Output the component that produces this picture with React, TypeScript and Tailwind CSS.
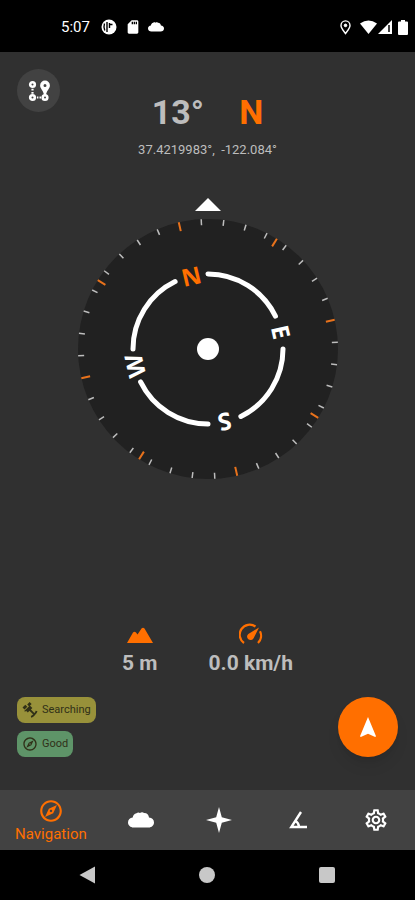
import React from 'react';
import { MdOutlineExplore, MdOutlineSettings, MdSdCard } from 'react-icons/md';

const AZIMUTH = 13;

const point = (angle: number, r: number) => {
  const rad = (angle * Math.PI) / 180;
  return [130 + r * Math.sin(rad), 130 - r * Math.cos(rad)];
};

const arc = (from: number, to: number, r: number) => {
  const [x1, y1] = point(from, r);
  const [x2, y2] = point(to, r);
  return `M${x1} ${y1}A${r} ${r} 0 0 1 ${x2} ${y2}`;
};

const minorTicks = Array.from({ length: 36 }, (_, i) => i * 10).filter((a) => a % 90 !== 0);
const majorTicks = Array.from({ length: 8 }, (_, i) => i * 45);

const cardinals = [
  { label: 'N', angle: 0, color: '#ff6f00' },
  { label: 'E', angle: 90, color: '#ffffff' },
  { label: 'S', angle: 180, color: '#ffffff' },
  { label: 'W', angle: 270, color: '#ffffff' },
];

const CloudIcon = ({ className }: { className?: string }) => (
  <svg viewBox="0 0 26 16" fill="currentColor" className={className}>
    <path d="M5.500 15.500C2.500 15.500 0 13.300 0 10.500C0 7.800 2 5.800 4.700 5.600C5 3.500 6.300 1.500 8.500 1.200C9.500 0.300 11 0.200 12 1C13 0.200 15 0 16 1C18.800 0.800 20.800 3 21 5.600C24 5.800 26 7.800 26 10.500C26 13.300 23.700 15.500 20.700 15.500Z" />
  </svg>
);

const RouteIcon = () => (
  <svg width="22" height="22" viewBox="0 0 22 22" fill="none" stroke="currentColor">
    <circle cx="4.500" cy="4.500" r="2.300" strokeWidth="2.600" />
    <circle cx="4.500" cy="17.500" r="2.300" strokeWidth="2.600" />
    <circle cx="17" cy="17.500" r="2.300" strokeWidth="2.600" />
    <path d="M4.500 8.800v1.800M4.500 11.900v1.800M8.900 17.500h1.500M11.500 17.500h1.500" strokeWidth="2.200" />
    <path fillRule="evenodd" fill="currentColor" stroke="none" d="M17 .5a4.900 4.900 0 0 0-4.900 4.900c0 3.400 3.600 5 4 10.300h1.800c.4-5.300 4-6.900 4-10.300A4.900 4.900 0 0 0 17 .5Zm0 3.500a1.500 1.500 0 1 1 0 3 1.500 1.500 0 0 1 0-3Z" />
  </svg>
);

const SatelliteIcon = () => (
  <svg width="16" height="16" viewBox="0 0 16 16" fill="currentColor">
    <path d="M.5 5.500 3.300 2.700l2 2-2.800 2.800ZM5.200 2.400 7.600 0l2 2-2.400 2.400ZM2.200 9 6 5.200l1.800-1.800 2.600 2.600-4.600 4.600-1.800-1.800-.9.900Z" />
    <path d="m7.500 7.500 4.700 4.700M9 14.800q1.500-.3 3.200-2.200 2-1.800 2.400-3.600" fill="none" stroke="currentColor" strokeWidth="1.800" />
  </svg>
);

const StatusBar = () => (
  <header className="flex h-[52px] items-center justify-between bg-black pl-[61px] pr-[7px] pt-[2px] text-white">
    <div className="flex items-center">
      <span className="text-[15px] leading-5">5:07</span>
      <svg width="16" height="16" viewBox="0 0 16 16" className="ml-[11px]">
        <circle cx="8" cy="8" r="7.500" fill="#fff" />
        <path d="M6 3v10M3.500 4.500Q2.300 8 3.800 11.500M8.500 4v5M8.500 5.500h3" stroke="#000" strokeWidth="1.400" fill="none" />
      </svg>
      <MdSdCard className="ml-[8px] size-4" />
      <CloudIcon className="ml-[7px] h-[12px] w-4" />
    </div>
    <div className="flex items-center">
      <svg width="11" height="15" viewBox="0 0 11 15" fill="none" stroke="#fff">
        <path d="M5.500 13.500C3 10.200 1 8 1 5.400a4.500 4.500 0 0 1 9 0c0 2.600-2 4.800-4.500 8.100Z" strokeWidth="1.400" />
        <circle cx="5.500" cy="5.400" r="1.300" fill="#fff" />
      </svg>
      <svg width="17" height="14" viewBox="0 0 17 14" fill="#fff" className="ml-[9px]">
        <path d="M8.500 14 0 3.600Q8.500-2.800 17 3.600Z" />
      </svg>
      <svg width="14" height="14" viewBox="0 0 14 14" fill="#fff" className="ml-px">
        <path d="M14 0v14H0Z" />
        <path d="M11 5v7" stroke="#000" strokeWidth="1.500" />
      </svg>
      <svg width="10" height="15" viewBox="0 0 10 15" fill="#fff" className="ml-[6px]">
        <path d="M3 0h4v1.500h2q1 0 1 1V14q0 1-1 1H1q-1 0-1-1V2.500q0-1 1-1h2Z" />
      </svg>
    </div>
  </header>
);

const Compass = () => (
  <div className="flex flex-col items-center gap-2">
    <svg width="26" height="13" viewBox="0 0 26 13">
      <path d="M13 0 26 13H0Z" fill="#fff" />
    </svg>
    <svg viewBox="0 0 260 260" className="w-[260px] max-w-full">
      <circle cx="130" cy="130" r="130" fill="#212121" />
      <g transform={`rotate(${-AZIMUTH} 130 130)`}>
        {minorTicks.map((a) => (
          <path key={a} d="M130 0v6" stroke="#bdbdbd" strokeWidth="1.500" transform={`rotate(${a} 130 130)`} />
        ))}
        {majorTicks.map((a) => (
          <path key={a} d="M130 0v9" stroke="#e8721c" strokeWidth="2" transform={`rotate(${a} 130 130)`} />
        ))}
        {[0, 90, 180, 270].map((a) => (
          <path key={a} d={arc(a + 13, a + 77, 75)} fill="none" stroke="#fff" strokeWidth="5" strokeLinecap="round" />
        ))}
        {cardinals.map((c) => (
          <text
            key={c.label}
            x="130"
            y="64"
            fill={c.color}
            fontSize="24"
            textAnchor="middle"
            transform={`rotate(${c.angle} 130 130)`}
            className="font-['Noto_Sans',sans-serif] font-bold"
          >
            {c.label}
          </text>
        ))}
      </g>
      <circle cx="130" cy="130" r="11" fill="#fff" />
    </svg>
  </div>
);

const Stats = () => (
  <div className="flex justify-center gap-[51px] text-[21px] font-bold leading-6 text-[#bdbdbd]">
    <div className="flex flex-col items-center gap-1">
      <svg width="26" height="24" viewBox="0 0 26 24" fill="#ff6f00">
        <path d="M0 20 6 9.500Q7.500 8 9 9.500L10.500 11.500 14.500 5.500Q16 4 17.500 5.500L26 20Z" />
      </svg>
      <span>5 m</span>
    </div>
    <div className="flex flex-col items-center gap-1">
      <svg width="24" height="24" viewBox="0 0 24 24" fill="none" stroke="#ff6f00" strokeWidth="2.200">
        <path d="M5 20A10 10 0 0 1 16.500 3.500M21 8.300A10 10 0 0 1 19 20" />
        <path d="M20 4.500 14.600 15.300A3.500 3.500 0 1 1 9.300 10.900Z" fill="#ff6f00" stroke="none" />
      </svg>
      <span>0.0 km/h</span>
    </div>
  </div>
);

const NavBar = () => (
  <nav className="flex h-[60px] bg-[#424242] text-white">
    <button className="flex flex-[13] flex-col items-center justify-center pt-px text-[#ff6f00]">
      <MdOutlineExplore className="size-[26px]" />
      <span className="text-[15px] leading-5">Navigation</span>
    </button>
    <button aria-label="Weather" className="flex flex-[10] items-center justify-center">
      <CloudIcon className="h-4 w-[26px]" />
    </button>
    <button aria-label="Astronomy" className="flex flex-[10] items-center justify-center">
      <svg width="26" height="26" viewBox="0 0 26 26" fill="currentColor">
        <path d="M13 0 15.800 10.200 26 13 15.800 15.800 13 26 10.200 15.800 0 13 10.200 10.200Z" />
      </svg>
    </button>
    <button aria-label="Inclinometer" className="flex flex-[10] items-center justify-center">
      <svg width="18" height="18" viewBox="0 0 18 18" fill="none" stroke="currentColor" strokeWidth="2.400">
        <path d="M12 1 2.300 16H18M6.300 10Q9.500 11.500 10 15.500" />
      </svg>
    </button>
    <button aria-label="Settings" className="flex flex-[10] items-center justify-center">
      <MdOutlineSettings className="size-[26px]" />
    </button>
  </nav>
);

const SystemBar = () => (
  <div className="grid h-[50px] grid-cols-3 place-items-center bg-black px-7 text-[#c8c8c8]">
    <button aria-label="Back">
      <svg width="17" height="18" viewBox="0 0 17 18" fill="currentColor">
        <path d="M16 0.500V17.500L0.500 9Z" />
      </svg>
    </button>
    <button aria-label="Home" className="size-4 rounded-full bg-[#c8c8c8]" />
    <button aria-label="Recent apps" className="size-4 rounded-xs bg-[#c8c8c8]" />
  </div>
);

const App: React.FC = () => {
  return (
    <div className="flex min-h-screen flex-col bg-[#303030] font-[Roboto,sans-serif]">
      <StatusBar />
      <main className="flex flex-1 flex-col">
        <div className="flex px-[17px] pt-[17px]">
          <button aria-label="Beacons" className="flex size-[43px] shrink-0 items-center justify-center rounded-full bg-[#424242] text-white">
            <RouteIcon />
          </button>
          <div className="flex flex-1 flex-col items-center pt-[23px] text-[#bdbdbd]">
            <h1 className="flex gap-[35px] text-[34px] font-bold leading-10">
              <span>13°</span>
              <span className="text-[#ff6f00]">N</span>
            </h1>
            <p className="mt-2 text-[13px] leading-5">37.4219983°,&nbsp; -122.084°</p>
          </div>
          <div className="w-[43px] shrink-0" />
        </div>
        <div className="mt-[38px]">
          <Compass />
        </div>
        <div className="mt-auto pt-8">
          <Stats />
        </div>
        <div className="mt-[22px] flex items-start justify-between px-[17px] pb-[33px]">
          <div className="flex flex-col items-start gap-2 text-[11px] text-[#303018]">
            <button className="flex h-[26px] items-center gap-1 rounded-lg bg-[#98913a] px-[5px]">
              <SatelliteIcon />
              Searching
            </button>
            <button className="flex h-[26px] items-center gap-1 rounded-lg bg-[#5e9468] px-[5px]">
              <MdOutlineExplore className="size-4" />
              Good
            </button>
          </div>
          <button aria-label="Navigate" className="flex size-[60px] items-center justify-center rounded-full bg-[#ff6f00] shadow-lg">
            <svg width="16" height="20" viewBox="0 0 16 20" fill="#fff">
              <path d="M8 0 16 19.200 15.200 20 8 16.800 .8 20 0 19.200Z" />
            </svg>
          </button>
        </div>
      </main>
      <NavBar />
      <SystemBar />
    </div>
  );
};

export default App;
